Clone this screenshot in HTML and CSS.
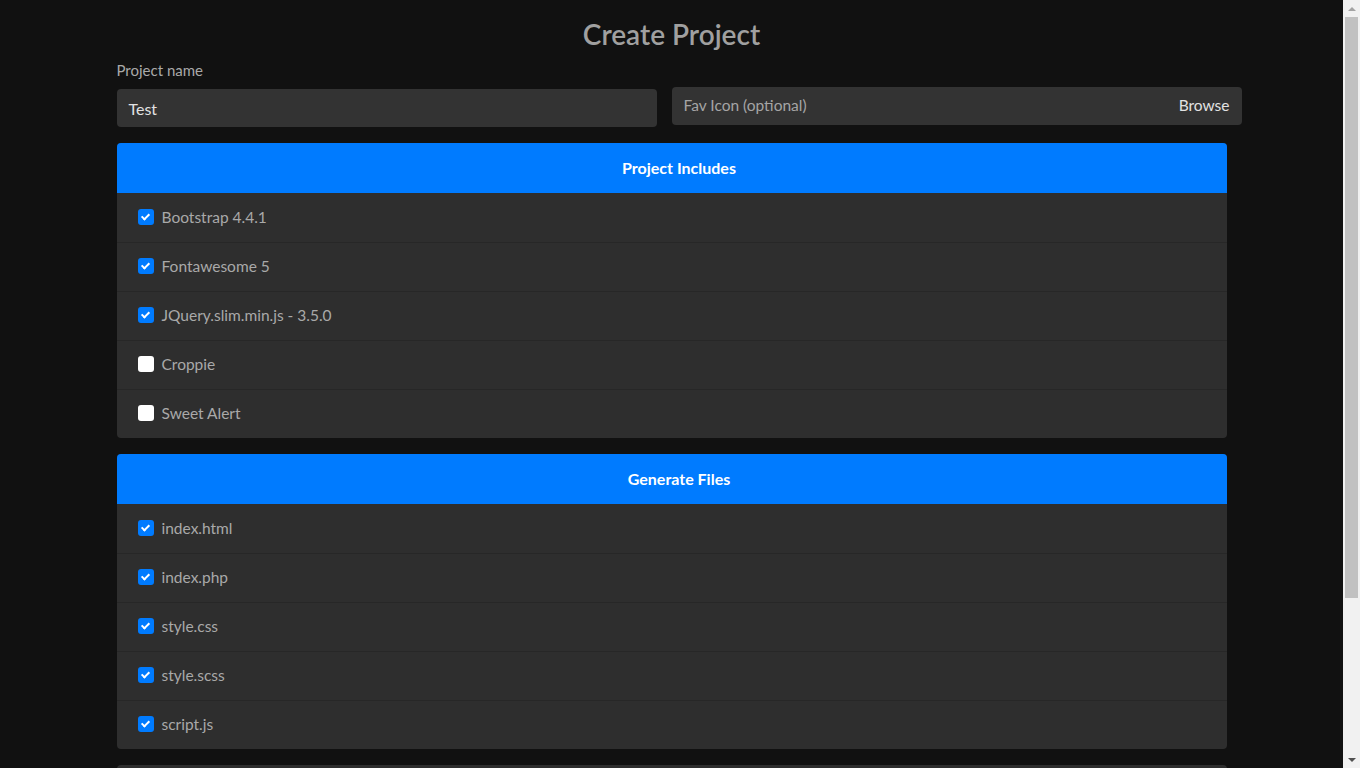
FILE: index.html
```html
<!DOCTYPE html>
<html lang="en">
<head>
<meta charset="utf-8">
<title>Create Project</title>
<link rel="stylesheet" href="styles.css">
</head>
<body>
<div class="window">
  <main class="viewport">
    <div class="container">
      <h1 class="title">Create Project</h1>
      <div class="form-row">
        <div class="col col-left">
          <label class="label">Project name</label>
          <div class="input">Test</div>
        </div>
        <div class="col col-right">
          <div class="input file-input">
            <span class="placeholder">Fav Icon (optional)</span>
            <span class="browse">Browse</span>
          </div>
        </div>
      </div>

      <div class="card">
        <div class="card-header">Project Includes</div>
        <ul class="list">
          <li class="item"><span class="check on"></span><span>Bootstrap 4.4.1</span></li>
          <li class="item"><span class="check on"></span><span>Fontawesome 5</span></li>
          <li class="item"><span class="check on"></span><span>JQuery.slim.min.js - 3.5.0</span></li>
          <li class="item"><span class="check"></span><span>Croppie</span></li>
          <li class="item"><span class="check"></span><span>Sweet Alert</span></li>
        </ul>
      </div>

      <div class="card">
        <div class="card-header">Generate Files</div>
        <ul class="list">
          <li class="item"><span class="check on"></span><span>index.html</span></li>
          <li class="item"><span class="check on"></span><span>index.php</span></li>
          <li class="item"><span class="check on"></span><span>style.css</span></li>
          <li class="item"><span class="check on"></span><span>style.scss</span></li>
          <li class="item"><span class="check on"></span><span>script.js</span></li>
        </ul>
      </div>

      <div class="card card-last">
        <div class="card-body"></div>
      </div>
    </div>
  </main>
  <div class="scrollbar" aria-hidden="true">
    <div class="sb-btn sb-up"><span class="arrow-up"></span></div>
    <div class="sb-track"><div class="sb-thumb"></div></div>
    <div class="sb-btn sb-down"><span class="arrow-down"></span></div>
  </div>
</div>
</body>
</html>
```

FILE: styles.css
```css
html, body {
  margin: 0;
  height: 100%;
  overflow: hidden;
  background: #111111;
}
body {
  font-family: "Lato", "Noto Sans", sans-serif;
  color: #a9a9a9;
  font-size: 16px;
}
.window {
  display: flex;
  height: 100vh;
}
.viewport {
  flex: 1;
  min-width: 0;
  overflow: hidden;
}
.scrollbar {
  width: 17px;
  flex-shrink: 0;
  background: #f1f1f1;
  display: flex;
  flex-direction: column;
}
.sb-btn {
  height: 17px;
  display: flex;
  align-items: center;
  justify-content: center;
}
.arrow-up {
  width: 0;
  height: 0;
  border-left: 4px solid transparent;
  border-right: 4px solid transparent;
  border-bottom: 4px solid #a3a3a3;
}
.arrow-down {
  width: 0;
  height: 0;
  border-left: 4px solid transparent;
  border-right: 4px solid transparent;
  border-top: 4px solid #505050;
}
.sb-track {
  flex: 1;
  padding: 0 2px;
}
.sb-thumb {
  height: 581px;
  background: #c1c1c1;
}
.container {
  width: 1110px;
  margin: 0 auto;
  padding: 0 15px 60px;
  box-sizing: content-box;
}
.title {
  margin: 16px 0 0;
  text-align: center;
  font-size: 28px;
  font-weight: 600;
  line-height: 36px;
  color: #a0a0a0;
}
.form-row {
  display: flex;
  gap: 15px;
  margin-right: -15px;
  margin-top: 6px;
}
.col-left {
  width: 540px;
}
.col-right {
  flex: 1;
  padding-top: 29px;
}
.label {
  display: block;
  height: 23px;
  padding-top: 1px;
  line-height: 23px;
  margin-bottom: 7px;
  font-size: 15px;
  color: #a9a9a9;
}
.input {
  height: 38px;
  box-sizing: border-box;
  background: #333333;
  border-radius: 4px;
  padding: 0 12px;
  line-height: 38px;
  font-size: 16px;
  color: #e2e2e2;
}
.col-left .input {
  padding-top: 1px;
}
.file-input {
  display: flex;
  justify-content: space-between;
  font-size: 15.5px;
  line-height: 36px;
}
.placeholder {
  color: #a5a5a5;
}
.browse {
  color: #e2e2e2;
}
.card {
  margin-top: 16px;
  background: #2e2e2e;
  border-radius: 4px;
  overflow: hidden;
}
.card-header {
  height: 50px;
  line-height: 50px;
  background: #007bff;
  color: #ffffff;
  text-align: center;
  font-weight: 700;
  font-size: 16px;
  padding-left: 15px;
}
.list {
  list-style: none;
  margin: 0;
  padding: 0;
}
.item {
  height: 49px;
  box-sizing: border-box;
  padding-bottom: 2px;
  display: flex;
  align-items: center;
  padding-left: 21px;
  border-top: 1px solid #272727;
  font-size: 15.5px;
}
.item:first-child {
  border-top: 0;
  padding-bottom: 1px;
}
.check {
  width: 16px;
  height: 16px;
  border-radius: 3px;
  background: #ffffff;
  margin-right: 8px;
  position: relative;
  flex-shrink: 0;
}
.check.on {
  background: #007bff;
}
.check.on::after {
  content: "";
  position: absolute;
  left: 5px;
  top: 3px;
  width: 3px;
  height: 6px;
  border: solid #ffffff;
  border-width: 0 2px 2px 0;
  transform: rotate(45deg);
}
.card-last .card-body {
  height: 150px;
}
```
